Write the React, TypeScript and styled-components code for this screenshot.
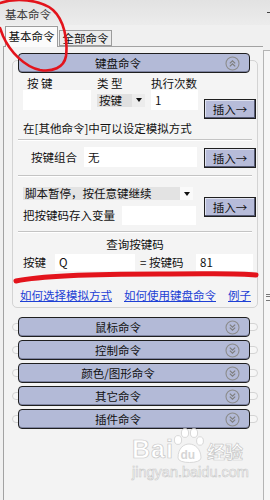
import React from 'react';
import styled, { createGlobalStyle } from 'styled-components';

const CJK = `"Noto Sans CJK SC", "Liberation Sans", sans-serif`;

const GlobalStyle = createGlobalStyle`
  html, body {
    margin: 0;
    padding: 0;
    background: #f0f0f0;
  }
  body {
    font-family: ${CJK};
  }
`;

export interface ISection {
  title: string;
}

const collapsed: ISection[] = [
  { title: '鼠标命令' },
  { title: '控制命令' },
  { title: '颜色/图形命令' },
  { title: '其它命令' },
  { title: '插件命令' },
];

const ChevronCircle = ({ up }: { up?: boolean }) => (
  <svg width="15" height="15" viewBox="0 0 15 15">
    <circle cx="7.5" cy="7.5" r="6.5" fill="none" stroke="#8c8c8c" strokeWidth="1.1" />
    <g
      fill="none"
      stroke="#7e7e7e"
      strokeWidth="1.2"
      transform={up ? undefined : 'rotate(180 7.5 7.5)'}
    >
      <polyline points="4.8,7.4 7.5,4.8 10.2,7.4" />
      <polyline points="4.8,10.4 7.5,7.8 10.2,10.4" />
    </g>
  </svg>
);

const Annotations = () => (
  <Overlay width="270" height="500" viewBox="0 0 270 500">
    <path
      d="M0 3 C 15 -2, 40 -1, 53 10 C 64 20, 68 40, 66 56 C 64 68, 52 72, 40 70 C 25 67, 10 52, 3 36 L 0 28"
      fill="none"
      stroke="#e3141c"
      strokeWidth="2.6"
      strokeLinecap="round"
    />
    <path
      d="M16 281 C 40 276, 100 274, 160 274 S 235 273, 256 275"
      fill="none"
      stroke="#e3141c"
      strokeWidth="5"
      strokeLinecap="round"
    />
  </Overlay>
);

const Watermark = () => (
  <Mark>
    <MarkTop>
      <MarkBai>Bai</MarkBai>
      <svg width="30" height="38" viewBox="0 0 30 38">
        <g fill="#fff" stroke="#cfcfcf" strokeWidth="0.8">
          <ellipse cx="4" cy="12" rx="3.6" ry="4.4" />
          <ellipse cx="11" cy="5" rx="3.6" ry="4.4" />
          <ellipse cx="20" cy="5" rx="3.6" ry="4.4" />
          <ellipse cx="26" cy="13" rx="3.4" ry="4.2" />
          <path d="M4 30 C 4 20, 10 16, 15 16 C 21 16, 27 21, 27 30 C 27 36, 4 36, 4 30 Z" />
        </g>
        <text x="6.5" y="31" fontFamily="Liberation Sans, sans-serif" fontSize="12" fontWeight="bold" fill="#d6d6d6">
          du
        </text>
      </svg>
      <MarkCn>经验</MarkCn>
    </MarkTop>
    <MarkUrl>jingyan.baidu.com</MarkUrl>
  </Mark>
);

export default function App() {
  return (
    <>
      <GlobalStyle />
      <Window>
        <TitleBar>
          <span>基本命令</span>
          <Pin />
        </TitleBar>
        <TabRow>
          <Tab $active>基本命令</Tab>
          <Tab>全部命令</Tab>
        </TabRow>
        <Body>
          <Panel>
            <Section>
              <Header>
                <HeaderLabel>键盘命令</HeaderLabel>
                <ChevronCircle up />
              </Header>
              <Box>
                <Block>
                  <LeftCol>
                    <KeyGrid>
                      <ColLabel $indent={4}>按 键</ColLabel>
                      <ColLabel>类 型</ColLabel>
                      <ColLabel>执行次数</ColLabel>
                      <TextField $h={20} />
                      <TypeSelect>
                        <SelectText>按键</SelectText>
                        <SelectArrow />
                      </TypeSelect>
                      <TextField $h={20}>1</TextField>
                    </KeyGrid>
                    <Note>在[其他命令]中可以设定模拟方式</Note>
                  </LeftCol>
                  <InsertButton $top={22}>插入→</InsertButton>
                </Block>
                <Separator $top={5} />
                <Block $top={6}>
                  <FieldLabel $w={61} $indent={8} $h={20}>按键组合</FieldLabel>
                  <TextField $w={113} $h={20}>无</TextField>
                  <InsertButton $top={1} $left={7}>插入→</InsertButton>
                </Block>
                <Separator $top={7} />
                <Block $top={10}>
                  <LeftCol>
                    <LongSelect>
                      <SelectText>脚本暂停，按任意键继续</SelectText>
                      <SelectArrow $light />
                    </LongSelect>
                    <VarRow>
                      <FieldLabel $w={99} $h={19}>把按键码存入变量</FieldLabel>
                      <TextField $w={74} $h={19} />
                    </VarRow>
                  </LeftCol>
                  <InsertButton $top={10}>插入→</InsertButton>
                </Block>
                <Separator $top={6} />
                <QueryTitle>查询按键码</QueryTitle>
                <QueryRow>
                  <FieldLabel $w={32} $h={17}>按键</FieldLabel>
                  <TextField $w={80} $h={17}>Q</TextField>
                  <FieldLabel $w={56} $h={17} $left={5}>= 按键码</FieldLabel>
                  <TextField $w={57} $h={17}>81</TextField>
                </QueryRow>
                <Links>
                  <Link href="#">如何选择模拟方式</Link>
                  <Link href="#">如何使用键盘命令</Link>
                  <Link href="#">例子</Link>
                </Links>
              </Box>
            </Section>
            {collapsed.map((entry: ISection) => (
              <Section key={entry.title}>
                <CollapsedBox>
                  <Header $inBox>
                    <HeaderLabel>{entry.title}</HeaderLabel>
                    <ChevronCircle />
                  </Header>
                </CollapsedBox>
              </Section>
            ))}
          </Panel>
          <Strip>
            <Grip />
          </Strip>
        </Body>
        <Watermark />
        <Annotations />
      </Window>
    </>
  );
}

const Window = styled.div`
  position: relative;
  width: 270px;
  height: 500px;
  overflow: hidden;
  display: flex;
  flex-direction: column;
  background: #f0f0f0;
  font-family: ${CJK};
  font-size: 11.5px;
  color: #111;
`;

const TitleBar = styled.div`
  height: 25px;
  flex-shrink: 0;
  box-sizing: border-box;
  padding: 3px 0 0 5px;
  display: flex;
  align-items: center;
  justify-content: space-between;
  background: linear-gradient(#e2e2e2, #ececec);
  color: #3a3a3a;
`;

const Pin = styled.div`
  width: 3px;
  height: 1px;
  margin-bottom: 3px;
  background: #444;
`;

const TabRow = styled.div`
  height: 21px;
  flex-shrink: 0;
  display: flex;
  align-items: flex-end;
  padding-left: 5px;
  gap: 1px;
`;

const Tab = styled.div<{ $active?: boolean }>`
  position: relative;
  z-index: 1;
  box-sizing: border-box;
  width: 53px;
  height: ${p => (p.$active ? 21 : 16)}px;
  margin-bottom: ${p => (p.$active ? -1 : 0)}px;
  border: 1px solid #9c9c9c;
  border-bottom: ${p => (p.$active ? 'none' : '1px solid #9c9c9c')};
  background: ${p => (p.$active ? '#fbfbfb' : '#ececec')};
  text-align: center;
  line-height: ${p => (p.$active ? 19 : 15)}px;
  color: #111;
`;

const Body = styled.div`
  flex: 1;
  display: flex;
`;

const Panel = styled.div`
  width: 260px;
  margin-left: 3px;
  box-sizing: border-box;
  border-left: 1px solid #a2a2a2;
  border-top: 1px solid #a2a2a2;
  padding-top: 6px;
  background: #f3f3f3;
`;

const Strip = styled.div`
  flex: 1;
  margin-top: 4px;
  border-left: 1px solid #b4b4b4;
  border-top: 1px solid #b4b4b4;
  background: #f6f6f6;
`;

const Grip = styled.div`
  width: 4px;
  height: 5px;
  margin: 243px 0 0 2px;
  border-top: 1px solid #777;
  border-bottom: 1px solid #777;
  background: linear-gradient(transparent 1.5px, #777 1.5px, #777 2.5px, transparent 2.5px);
`;

const Section = styled.section`
  margin: 0 5px 0 8px;
`;

const Header = styled.div<{ $inBox?: boolean }>`
  position: relative;
  z-index: 1;
  flex: 1;
  display: flex;
  align-items: center;
  height: 20px;
  flex-shrink: 0;
  box-sizing: border-box;
  margin: ${p => (p.$inBox ? '0 7px 0 5px' : '0 8px 0 6px')};
  padding-right: 9px;
  background: #b3bad7;
  border: 1px solid #1f1f1f;
  border-radius: 4px;
  box-shadow: inset 0 -1px 0 #7e84a2;
`;

const HeaderLabel = styled.div`
  flex: 1;
  text-align: center;
  padding-right: 8px;
  line-height: 18px;
  color: #111;
`;

const Box = styled.div`
  margin-top: -13px;
  padding: 16px 1px 6px 10px;
  border: 1px solid #d3d3d3;
  border-radius: 5px;
  background: #f4f4f4;
`;

const CollapsedBox = styled.div`
  height: 8px;
  box-sizing: border-box;
  margin: 15px 0 2px;
  display: flex;
  align-items: center;
  border: 1px solid #d3d3d3;
  border-radius: 4px;
  background: #f6f6f6;
`;

const Block = styled.div<{ $top?: number }>`
  display: flex;
  align-items: flex-start;
  margin-top: ${p => p.$top || 0}px;
`;

const LeftCol = styled.div`
  width: 175px;
  flex-shrink: 0;
  display: flex;
  flex-direction: column;
`;

const KeyGrid = styled.div`
  display: grid;
  grid-template-columns: 68px 48px 47px;
  column-gap: 6px;
  row-gap: 1px;
`;

const ColLabel = styled.div<{ $indent?: number }>`
  height: 12px;
  line-height: 12px;
  padding-left: ${p => p.$indent || 0}px;
  white-space: nowrap;
`;

const TextField = styled.div<{ $w?: number; $h: number }>`
  width: ${p => (p.$w ? `${p.$w}px` : 'auto')};
  height: ${p => p.$h}px;
  line-height: ${p => p.$h}px;
  flex-shrink: 0;
  box-sizing: border-box;
  padding-left: 4px;
  background: #fff;
  color: #111;
`;

const TypeSelect = styled.div`
  align-self: center;
  height: 13px;
  display: flex;
  background: #e0e0e0;
`;

const LongSelect = styled.div`
  width: 170px;
  height: 13px;
  display: flex;
  background: #e3e3e3;
`;

const SelectText = styled.div`
  flex: 1;
  padding-left: 2px;
  line-height: 13px;
  white-space: nowrap;
`;

const SelectArrow = styled.div<{ $light?: boolean }>`
  width: 13px;
  flex-shrink: 0;
  display: flex;
  align-items: center;
  justify-content: center;
  background: ${p => (p.$light ? '#fafafa' : '#ececec')};

  &:after {
    content: '';
    border-left: 3.5px solid transparent;
    border-right: 3.5px solid transparent;
    border-top: 4px solid #111;
  }
`;

const Note = styled.div`
  margin-top: 12px;
  line-height: 12px;
  white-space: nowrap;
`;

const InsertButton = styled.div<{ $top?: number; $left?: number }>`
  width: 52px;
  height: 20px;
  flex-shrink: 0;
  box-sizing: border-box;
  margin-top: ${p => p.$top || 0}px;
  margin-left: ${p => (p.$left !== undefined ? p.$left : 6)}px;
  border: 1px solid #1f1f1f;
  background: #b7bcd9;
  box-shadow: inset -1px -1px 0 #555a74, inset 1px 1px 0 #dfe2f0;
  text-align: center;
  line-height: 18px;
  color: #111;
`;

const FieldLabel = styled.div<{ $w: number; $h: number; $indent?: number; $left?: number }>`
  width: ${p => p.$w}px;
  height: ${p => p.$h}px;
  line-height: ${p => p.$h}px;
  flex-shrink: 0;
  box-sizing: border-box;
  padding-left: ${p => p.$indent || 0}px;
  margin-left: ${p => p.$left || 0}px;
  white-space: nowrap;
`;

const Separator = styled.div<{ $top: number }>`
  margin: ${p => p.$top}px 4px 0 -5px;
  border-top: 1px solid #c4c4c4;
  border-bottom: 1px solid #fff;
`;

const VarRow = styled.div`
  display: flex;
  align-items: center;
  margin-top: 6px;
`;

const QueryTitle = styled.div`
  margin: 5px 4px 0 -5px;
  text-align: center;
  line-height: 12px;
`;

const QueryRow = styled.div`
  display: flex;
  align-items: center;
  margin-top: 4px;
`;

const Links = styled.div`
  display: flex;
  justify-content: space-between;
  margin: 18px 5px 0 -3px;
  line-height: 12px;
`;

const Link = styled.a`
  color: #1d3fd4;
  text-decoration: underline;
  white-space: nowrap;
`;

const Overlay = styled.svg`
  position: absolute;
  left: 0;
  top: 0;
  z-index: 5;
  pointer-events: none;
`;

const Mark = styled.div`
  position: absolute;
  left: 132px;
  top: 428px;
  z-index: 4;
  pointer-events: none;
  display: flex;
  flex-direction: column;
  color: #fff;
`;

const MarkTop = styled.div`
  display: flex;
  align-items: flex-end;
`;

const MarkBai = styled.span`
  font-family: "Liberation Sans", sans-serif;
  font-weight: bold;
  font-size: 25px;
  line-height: 26px;
  letter-spacing: 1px;
  -webkit-text-stroke: 0.7px #c8c8c8;
  margin-bottom: 4px;
`;

const MarkCn = styled.span`
  font-family: ${CJK};
  font-weight: bold;
  font-size: 18px;
  line-height: 22px;
  margin: 0 0 4px 3px;
  -webkit-text-stroke: 0.7px #c8c8c8;
`;

const MarkUrl = styled.span`
  font-family: "Liberation Sans", sans-serif;
  font-size: 14.5px;
  line-height: 16px;
  margin-top: -2px;
  -webkit-text-stroke: 0.6px #c8c8c8;
`;
